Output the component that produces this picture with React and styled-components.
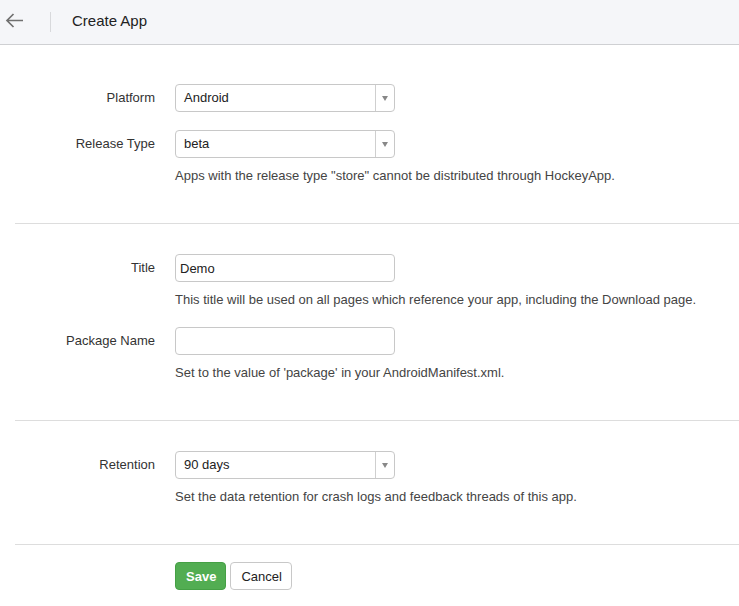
import React from "react";
import styled, { createGlobalStyle } from "styled-components";

const Global = createGlobalStyle`
  html, body { margin: 0; padding: 0; background: #fff; }
  body { font-family: "Liberation Sans", Arial, sans-serif; font-size: 13px; color: #333; }
  * { box-sizing: border-box; }
`;

const Header = styled.header`
  height: 45px;
  padding-bottom: 3px;
  display: flex;
  align-items: center;
  background: #f5f6f9;
  border-bottom: 1px solid #cfd0d3;
`;

const BackButton = styled.button`
  width: 28px;
  height: 30px;
  margin-left: 0;
  padding: 0;
  border: 0;
  background: none;
  display: flex;
  align-items: center;
  justify-content: center;
  cursor: pointer;
`;

const Separator = styled.div`
  width: 1px;
  height: 20px;
  margin-top: 3px;
  background: #d8d9dc;
  margin-left: 22px;
  margin-right: 21px;
`;

const Title = styled.h1`
  margin: 0;
  font-size: 15px;
  font-weight: normal;
  color: #222;
`;

const Body = styled.div`
  padding-left: 15px;
  padding-top: 9px;
`;

const Section = styled.section`
  padding: 30px 0 38px;
  border-bottom: 1px solid #ddd;
  display: flex;
  flex-direction: column;
  gap: 18px;
`;

const Group = styled.div`
  display: grid;
  grid-template-columns: 140px 220px;
  column-gap: 20px;
  align-items: center;
`;

const Label = styled.label`
  text-align: right;
  color: #333;
  line-height: 18px;
`;

const Help = styled.div`
  grid-column: 2;
  width: 600px;
  margin-top: 9px;
  line-height: 18px;
  color: #444;
`;

const SelectBox = styled.div`
  height: 28px;
  display: flex;
  border: 1px solid #c8c8c8;
  border-radius: 4px;
  background: #fff;
`;

const SelectValue = styled.div`
  flex: 1;
  padding-left: 8px;
  line-height: 26px;
  color: #222;
`;

const SelectArrow = styled.div`
  width: 19px;
  border-left: 1px solid #cfcfcf;
  display: flex;
  align-items: center;
  justify-content: center;
  &::after {
    content: "";
    width: 0;
    height: 0;
    border-left: 3.5px solid transparent;
    border-right: 3.5px solid transparent;
    border-top: 5px solid #888;
    margin-top: 1px;
  }
`;

const TextInput = styled.input`
  height: 28px;
  width: 220px;
  border: 1px solid #c8c8c8;
  border-radius: 4px;
  padding: 0 4px;
  font: inherit;
  color: #222;
  outline: none;
`;

const Actions = styled.div`
  padding: 17px 0 0 160px;
  display: flex;
  gap: 4px;
`;

const Button = styled.button`
  height: 28px;
  padding: 0 9px 0 10px;
  border-radius: 4px;
  font-family: inherit;
  font-size: 13px;
  cursor: pointer;
  border: 1px solid ${(p) => (p.$primary ? "#45a045" : "#c8c8c8")};
  background: ${(p) => (p.$primary ? "#52ad52" : "#fff")};
  color: ${(p) => (p.$primary ? "#fff" : "#222")};
  font-weight: ${(p) => (p.$primary ? "bold" : "normal")};
`;

const Select = ({ value }) => (
  <SelectBox>
    <SelectValue>{value}</SelectValue>
    <SelectArrow />
  </SelectBox>
);

export default function App() {
  return (
    <>
      <Global />
      <Header>
        <BackButton aria-label="Back">
          <svg width="19" height="15" viewBox="0 0 19 15" fill="none">
            <path d="M18 7.5H2M8.5 1L2 7.5L8.5 14" stroke="#707070" strokeWidth="1.7" />
          </svg>
        </BackButton>
        <Separator />
        <Title>Create App</Title>
      </Header>
      <Body>
        <Section>
          <Group>
            <Label>Platform</Label>
            <Select value="Android" />
          </Group>
          <Group>
            <Label>Release Type</Label>
            <Select value="beta" />
            <Help>Apps with the release type "store" cannot be distributed through HockeyApp.</Help>
          </Group>
        </Section>
        <Section>
          <Group>
            <Label>Title</Label>
            <TextInput defaultValue="Demo" />
            <Help>This title will be used on all pages which reference your app, including the Download page.</Help>
          </Group>
          <Group>
            <Label>Package Name</Label>
            <TextInput defaultValue="" />
            <Help>Set to the value of 'package' in your AndroidManifest.xml.</Help>
          </Group>
        </Section>
        <Section>
          <Group>
            <Label>Retention</Label>
            <Select value="90 days" />
            <Help>Set the data retention for crash logs and feedback threads of this app.</Help>
          </Group>
        </Section>
        <Actions>
          <Button $primary>Save</Button>
          <Button>Cancel</Button>
        </Actions>
      </Body>
    </>
  );
}
